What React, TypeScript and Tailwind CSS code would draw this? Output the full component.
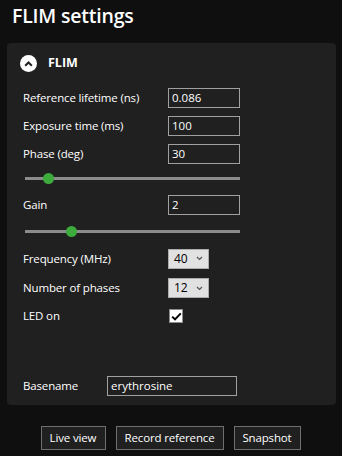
import React from 'react';

const font = { fontFamily: '"Open Sans", "Noto Sans", sans-serif' };

function TextRow({ label, value, height }: { label: string; value: string; height: string }) {
  return (
    <div className={`flex items-center ${height}`}>
      <span className="w-[145px] text-[11.5px] tracking-[-0.15px] text-white">{label}</span>
      <div className="flex h-[20px] w-[72px] items-center border border-[#a0a0a0] bg-[#202020] px-[3px] text-[11.5px] text-white">
        {value}
      </div>
    </div>
  );
}

function Slider({ pos, height }: { pos: number; height: string }) {
  return (
    <div className={`relative flex items-center ${height} w-[215px] ml-[2px]`}>
      <div className="h-[3px] w-full bg-[#8c8c8c]" />
      <div
        className="absolute h-[11px] w-[11px] rounded-full bg-[#3cab3c]"
        style={{ left: pos - 5.5 }}
      />
    </div>
  );
}

function SelectRow({ label, value, height }: { label: string; value: string; height: string }) {
  return (
    <div className={`flex items-center ${height}`}>
      <span className="w-[145px] text-[11.5px] tracking-[-0.15px] text-white">{label}</span>
      <div className="flex h-[20px] w-[41px] items-center justify-between border border-[#acacac] bg-[#e1e1e1] pl-[5px] pr-[5px] text-[12px] text-black">
        <span>{value}</span>
        <svg width="7" height="5" viewBox="0 0 7 5">
          <path d="M1 1 L3.5 3.5 L6 1" fill="none" stroke="#555" strokeWidth="1.2" />
        </svg>
      </div>
    </div>
  );
}

export default function App() {
  return (
    <div className="h-[456px] w-[342px] bg-[#0f0f0f] text-white" style={font}>
      <h1 className="pl-[12px] pt-[2px] h-[43px] text-[19.5px] font-semibold leading-[28px] tracking-[-0.2px]">FLIM settings</h1>

      <div className="ml-[7px] w-[329px] h-[362px] rounded-[4px] bg-[#202020] flex flex-col">
        {/* header */}
        <div className="flex h-[41px] items-center pl-[13px]">
          <div className="flex h-[17px] w-[17px] items-center justify-center rounded-full bg-white">
            <svg width="9" height="6" viewBox="0 0 9 6">
              <path d="M1.2 4.8 L4.5 1.5 L7.8 4.8" fill="none" stroke="#202020" strokeWidth="2" />
            </svg>
          </div>
          <span className="ml-[11px] text-[12.5px] font-bold">FLIM</span>
        </div>

        <div className="flex flex-col pl-[16px]">
          <TextRow label="Reference lifetime (ns)" value="0.086" height="h-[28px]" />
          <TextRow label="Exposure time (ms)" value="100" height="h-[28px]" />
          <TextRow label="Phase (deg)" value="30" height="h-[28px]" />
          <Slider pos={23} height="h-[20px]" />
          <TextRow label="Gain" value="2" height="h-[34px]" />
          <Slider pos={46} height="h-[18px]" />
          <SelectRow label="Frequency (MHz)" value="40" height="h-[37px]" />
          <SelectRow label="Number of phases" value="12" height="h-[22px]" />
          <div className="flex h-[34px] items-center">
            <span className="w-[146px] text-[11.5px] tracking-[-0.15px]">LED on</span>
            <div className="flex h-[14px] w-[14px] items-center justify-center border border-[#8c8c8c] bg-white">
              <svg width="11" height="9" viewBox="0 0 11 9">
                <path d="M1.2 4.6 L4 7.4 L9.8 1.4" fill="none" stroke="#000" strokeWidth="2" />
              </svg>
            </div>
          </div>
          <div className="h-[43px]" />
          <div className="flex h-[20px] items-center">
            <span className="w-[84px] text-[11.5px] tracking-[-0.15px]">Basename</span>
            <div className="flex h-[20px] w-[130px] items-center border border-[#a0a0a0] bg-[#202020] px-[3px] text-[11.5px]">
              erythrosine
            </div>
          </div>
        </div>
      </div>

      <div className="mt-[21px] flex justify-center gap-[10px] pr-[1px]">
        <button className="h-[24px] w-[65px] border border-[#6e6e6e] bg-[#202020] text-[11.5px] tracking-[-0.15px] text-white">Live view</button>
        <button className="h-[24px] w-[108px] border border-[#6e6e6e] bg-[#202020] text-[11.5px] tracking-[-0.15px] text-white">Record reference</button>
        <button className="h-[24px] w-[67px] border border-[#6e6e6e] bg-[#202020] text-[11.5px] tracking-[-0.15px] text-white">Snapshot</button>
      </div>
    </div>
  );
}
